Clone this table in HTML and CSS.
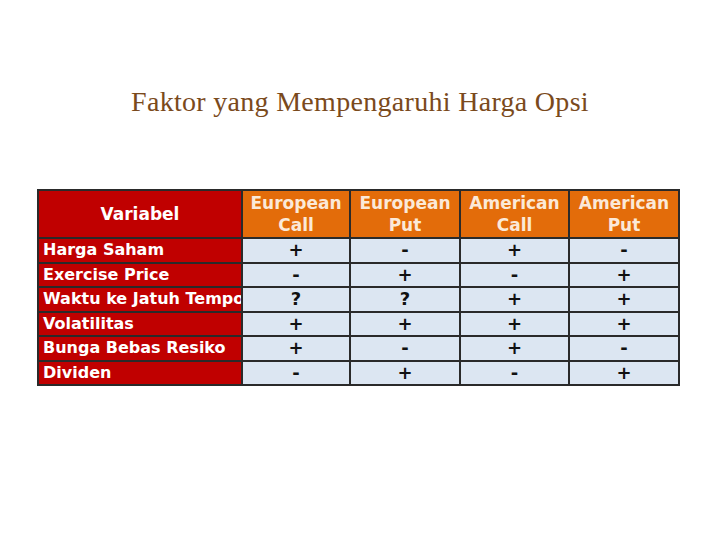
FILE: index.html
```html
<!DOCTYPE html>
<html>
<head>
<meta charset="utf-8">
<link rel="stylesheet" href="styles.css">
</head>
<body>
<h1 class="title">Faktor yang Mempengaruhi Harga Opsi</h1>
<table class="grid">
  <colgroup>
    <col class="c-var"><col class="c-a"><col class="c-b"><col class="c-c"><col class="c-d">
  </colgroup>
  <thead>
    <tr>
      <th class="var-h">Variabel</th>
      <th class="opt-h">European<br>Call</th>
      <th class="opt-h">European<br>Put</th>
      <th class="opt-h">American<br>Call</th>
      <th class="opt-h">American<br>Put</th>
    </tr>
  </thead>
  <tbody>
    <tr><td class="var"><div class="clip">Harga Saham</div></td><td>+</td><td>-</td><td>+</td><td>-</td></tr>
    <tr><td class="var"><div class="clip">Exercise Price</div></td><td>-</td><td>+</td><td>-</td><td>+</td></tr>
    <tr><td class="var"><div class="clip">Waktu ke Jatuh Tempo</div></td><td>?</td><td>?</td><td>+</td><td>+</td></tr>
    <tr><td class="var"><div class="clip">Volatilitas</div></td><td>+</td><td>+</td><td>+</td><td>+</td></tr>
    <tr><td class="var"><div class="clip">Bunga Bebas Resiko</div></td><td>+</td><td>-</td><td>+</td><td>-</td></tr>
    <tr><td class="var"><div class="clip">Dividen</div></td><td>-</td><td>+</td><td>-</td><td>+</td></tr>
  </tbody>
</table>
</body>
</html>
```
FILE: styles.css
```css
html, body {
  margin: 0;
  padding: 0;
  background: #ffffff;
}
.title {
  margin: 0;
  padding-top: 84px;
  text-align: center;
  font-family: "Liberation Serif", serif;
  font-weight: normal;
  font-size: 28px;
  line-height: 36px;
  letter-spacing: 0.3px;
  color: #7a4a1c;
}
.grid {
  margin: 69px 0 0 37px;
  border-collapse: collapse;
  table-layout: fixed;
  width: 641px;
  font-family: "DejaVu Sans", Verdana, sans-serif;
  font-weight: bold;
}
.c-var { width: 204px; }
.c-a { width: 108px; }
.c-b { width: 110px; }
.c-c { width: 109px; }
.c-d { width: 110px; }
.grid th, .grid td {
  border: 2px solid #2a2a2a;
  padding: 0;
}
.var-h {
  background: #c00000;
  color: #ffffff;
  font-size: 17px;
  height: 46px;
  text-align: center;
}
.opt-h {
  background: #e36c0a;
  color: #fbe9d8;
  font-size: 17px;
  line-height: 22px;
  text-align: center;
  border-left-width: 3px;
}
.grid td {
  background: #dce6f2;
  color: #111111;
  text-align: center;
  font-size: 18px;
  height: 22.5px;
  line-height: 22px;
}
.grid td.var {
  background: #c00000;
  color: #ffffff;
  text-align: left;
  font-size: 16px;
}
.clip {
  overflow: hidden;
  white-space: nowrap;
  padding-left: 4px;
}
```
